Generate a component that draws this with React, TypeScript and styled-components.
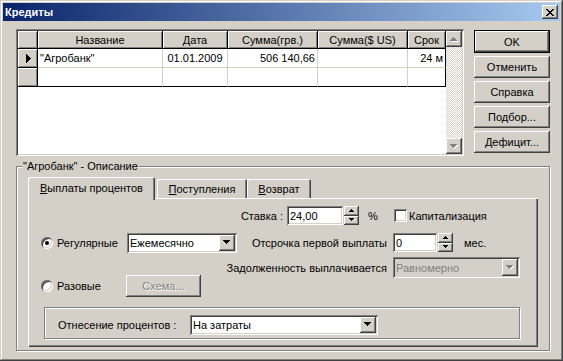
import { Fragment } from "react";
import styled, { createGlobalStyle, css } from "styled-components";

const FACE = "#d4d0c8";

const raised = css`
  box-shadow: inset -1px -1px #404040, inset 1px 1px #fff, inset -2px -2px #808080, inset 2px 2px ${FACE};
`;

const sunken = css`
  box-shadow: inset 1px 1px #808080, inset -1px -1px #fff, inset 2px 2px #404040, inset -2px -2px ${FACE};
`;

const etched = css`
  border: 1px solid #808080;
  box-shadow: inset 1px 1px #fff, 1px 1px #fff;
`;

const GlobalStyle = createGlobalStyle`
  html, body { margin: 0; padding: 0; background: ${FACE}; }
  body {
    font-family: "Liberation Sans", Arial, sans-serif;
    font-size: 11px;
    color: #000;
  }
  * { box-sizing: border-box; }
`;

// pixel triangles, like the classic windows glyphs
const PixelArrow = ({ dir, small, disabled }: { dir: "up" | "down"; small?: boolean; disabled?: boolean }) => {
  const widths = small ? [5, 3, 1] : [7, 5, 3, 1];
  const total = widths[0];
  const list = dir === "up" ? [...widths].reverse() : widths;
  const d = list
    .map((w, i) => {
      const x = (total - w) / 2;
      return `M${x} ${i}h${w}v1h-${w}z`;
    })
    .join("");
  return (
    <svg width={total + 1} height={list.length + 1} viewBox={`0 0 ${total + 1} ${list.length + 1}`} shapeRendering="crispEdges">
      {disabled && <path d={d} fill="#fff" transform="translate(1 1)" />}
      <path d={d} fill={disabled ? "#808080" : "#000"} />
    </svg>
  );
};

const RowMarker = () => (
  <svg width="5" height="9" viewBox="0 0 5 9" shapeRendering="crispEdges">
    <path d="M0 0h1v9H0zM1 1h1v7H1zM2 2h1v5H2zM3 3h1v3H3zM4 4h1v1H4z" fill="#000" />
  </svg>
);

const CloseGlyph = () => (
  <svg width="8" height="7" viewBox="0 0 8 7" shapeRendering="crispEdges">
    <path
      d="M0 0h2v1H0zM6 0h2v1H6zM1 1h2v1H1zM5 1h2v1H5zM2 2h4v1H2zM3 3h2v1H3zM2 4h4v1H2zM1 5h2v1H1zM5 5h2v1H5zM0 6h2v1H0zM6 6h2v1H6z"
      fill="#000"
    />
  </svg>
);

const Window = styled.div`
  width: 563px;
  height: 361px;
  padding: 3px;
  background: ${FACE};
  box-shadow: inset -1px -1px #404040, inset 1px 1px ${FACE}, inset -2px -2px #808080, inset 2px 2px #fff;
  display: flex;
  flex-direction: column;
`;

const TitleBar = styled.div`
  height: 18px;
  display: flex;
  align-items: center;
  padding: 0 2px 0 2px;
  background: linear-gradient(to right, #0a246a, #a6caf0);
`;

const Title = styled.div`
  flex: 1;
  color: #fff;
  font-weight: bold;
  font-size: 11px;
`;

const CloseButton = styled.div`
  width: 16px;
  height: 14px;
  background: ${FACE};
  ${raised};
  display: flex;
  align-items: center;
  justify-content: center;
`;

const Body = styled.div`
  flex: 1;
  display: flex;
  flex-direction: column;
  padding: 8px 10px 7px 13px;
`;

const TopRow = styled.div`
  display: flex;
  gap: 10px;
  height: 127px;
`;

const GridFrame = styled.div`
  flex: 1;
  display: flex;
  padding: 2px;
  background: #fff;
  ${sunken};
`;

const Table = styled.div`
  flex: 1;
  overflow: hidden;
  display: grid;
  grid-template-columns: 20px 125px 65px 90px 90px 38px;
  grid-template-rows: 18px 19px 19px;
  align-content: start;
  background: #fff;
`;

type CellKind = "head" | "fixed" | "data";

const Cell = styled.div<{ $kind: CellKind; $align?: "left" | "center" | "right"; $lastCol?: boolean; $lastRow?: boolean }>`
  display: flex;
  align-items: center;
  overflow: hidden;
  white-space: nowrap;
  padding: 0 2px;
  justify-content: ${(p) => (p.$align === "right" ? "flex-end" : p.$align === "center" ? "center" : "flex-start")};
  border-right: 1px solid ${(p) => (p.$kind === "data" && !p.$lastCol ? FACE : "#000")};
  border-bottom: 1px solid ${(p) => (p.$kind === "data" && !p.$lastRow ? FACE : "#000")};
  background: ${(p) => (p.$kind === "data" ? "#fff" : FACE)};
  ${(p) => p.$kind !== "data" && css`box-shadow: inset 1px 1px #fff, inset -1px -1px #808080;`}
`;

const MarkerCell = styled(Cell)`
  padding: 0 0 0 8px;
`;

const ScrollBar = styled.div`
  width: 16px;
  display: flex;
  flex-direction: column;
  background: repeating-conic-gradient(#fff 0 25%, ${FACE} 0 50%) 0 0 / 2px 2px;
`;

const ScrollButton = styled.div`
  width: 16px;
  height: 16px;
  background: ${FACE};
  ${raised};
  display: flex;
  align-items: center;
  justify-content: center;
`;

const ScrollTrack = styled.div`
  flex: 1;
`;

const ButtonColumn = styled.div`
  width: 76px;
  display: flex;
  flex-direction: column;
  gap: 3px;
  padding-top: 1px;
`;

const PushButton = styled.button<{ $default?: boolean; $disabled?: boolean; $w?: number }>`
  width: ${(p) => (p.$w ? `${p.$w}px` : "100%")};
  height: ${(p) => (p.$default ? 23 : 22)}px;
  padding: 0;
  margin: 0;
  font: inherit;
  border: ${(p) => (p.$default ? "1px solid #000" : "0")};
  background: ${FACE};
  ${raised};
  display: flex;
  align-items: center;
  justify-content: center;
  color: ${(p) => (p.$disabled ? "#808080" : "#000")};
  text-shadow: ${(p) => (p.$disabled ? "1px 1px #fff" : "none")};
`;

const GroupBox = styled.fieldset`
  flex: 1;
  margin: 4px 0 0 0;
  padding: 4px 11px 3px 11px;
  min-width: 0;
  ${etched};
  display: flex;
  flex-direction: column;
`;

const Legend = styled.legend`
  padding: 0 1px;
  margin-left: -6px;
  line-height: 13px;
  background: ${FACE};
`;

const TabStrip = styled.div`
  display: flex;
  align-items: flex-end;
  height: 21px;
`;

const Tab = styled.div<{ $active?: boolean; $w: number; $gap?: number }>`
  width: ${(p) => p.$w}px;
  height: ${(p) => (p.$active ? 23 : 19)}px;
  margin-bottom: ${(p) => (p.$active ? -2 : 0)}px;
  margin-left: ${(p) => p.$gap ?? 0}px;
  padding-bottom: ${(p) => (p.$active ? 2 : 0)}px;
  position: relative;
  z-index: ${(p) => (p.$active ? 1 : 0)};
  display: flex;
  align-items: center;
  justify-content: center;
  background: ${FACE};
  border-radius: 2px 2px 0 0;
  box-shadow: inset 1px 1px #fff, inset -1px 0 #404040, inset -2px 0 #808080;
`;

const Panel = styled.div`
  flex: 1;
  display: flex;
  flex-direction: column;
  padding: 7px 0 0 13px;
  background: ${FACE};
  box-shadow: inset 1px 1px #fff, inset -1px -1px #404040, inset -2px -2px #808080;
`;

const Row = styled.div<{ $h: number; $mt: number }>`
  display: flex;
  align-items: center;
  height: ${(p) => p.$h}px;
  margin-top: ${(p) => p.$mt}px;
`;

const SplitRow = styled.div`
  display: flex;
  height: 40px;
  margin-top: 4px;
`;

const LeftGroup = styled.div`
  display: flex;
  align-items: center;
  align-self: flex-end;
`;

const RightGroup = styled.div`
  display: flex;
  align-items: center;
  align-self: flex-start;
`;

const Caption = styled.span<{ $w: number; $right?: boolean; $pr?: number }>`
  width: ${(p) => p.$w}px;
  flex: none;
  white-space: nowrap;
  text-align: ${(p) => (p.$right ? "right" : "left")};
  padding-right: ${(p) => (p.$right ? p.$pr ?? 6 : 0)}px;
`;

const Unit = styled.span<{ $w: number; $pl: number }>`
  width: ${(p) => p.$w}px;
  padding-left: ${(p) => p.$pl}px;
  flex: none;
`;

const EditField = styled.div<{ $w: number }>`
  width: ${(p) => p.$w}px;
  height: 19px;
  padding: 0 3px;
  display: flex;
  align-items: center;
  background: #fff;
  ${sunken};
`;

const SpinButtons = styled.div`
  width: 15px;
  height: 19px;
  margin-left: 1px;
  display: flex;
  flex-direction: column;
`;

const SpinButton = styled.div`
  flex: 1;
  background: ${FACE};
  ${raised};
  display: flex;
  align-items: center;
  justify-content: center;
`;

const Combo = styled.div<{ $w: number; $h: number; $disabled?: boolean }>`
  width: ${(p) => p.$w}px;
  height: ${(p) => p.$h}px;
  flex: none;
  padding: 2px;
  display: flex;
  background: ${(p) => (p.$disabled ? FACE : "#fff")};
  color: ${(p) => (p.$disabled ? "#808080" : "#000")};
  ${sunken};
`;

const ComboText = styled.span`
  flex: 1;
  display: flex;
  align-items: center;
  padding-left: 1px;
  white-space: nowrap;
`;

const DropButton = styled.div`
  width: 16px;
  background: ${FACE};
  ${raised};
  display: flex;
  align-items: center;
  justify-content: center;
`;

const RadioLabel = styled.label<{ $w: number }>`
  width: ${(p) => p.$w}px;
  flex: none;
  display: flex;
  align-items: center;
  gap: 4px;
`;

const RadioCircle = styled.span<{ $checked?: boolean }>`
  width: 12px;
  height: 12px;
  border-radius: 50%;
  background: #fff;
  ${sunken};
  display: flex;
  align-items: center;
  justify-content: center;
  &::after {
    content: "";
    width: 4px;
    height: 4px;
    border-radius: 50%;
    background: #000;
    display: ${(p) => (p.$checked ? "block" : "none")};
  }
`;

const CheckLabel = styled.label`
  display: flex;
  align-items: center;
  gap: 2px;
`;

const CheckBox = styled.span`
  width: 13px;
  height: 13px;
  background: #fff;
  ${sunken};
`;

const InnerFrame = styled.div`
  width: 476px;
  height: 32px;
  margin: 10px 0 0 3px;
  padding: 3px 0 0 13px;
  display: flex;
  align-items: center;
  ${etched};
`;

const SpinEdit = ({ value, w }: { value: string; w: number }) => (
  <>
    <EditField $w={w}>{value}</EditField>
    <SpinButtons>
      <SpinButton>
        <PixelArrow dir="up" small />
      </SpinButton>
      <SpinButton>
        <PixelArrow dir="down" small />
      </SpinButton>
    </SpinButtons>
  </>
);

const ComboBox = ({ value, w, h, disabled }: { value: string; w: number; h: number; disabled?: boolean }) => (
  <Combo $w={w} $h={h} $disabled={disabled}>
    <ComboText>{value}</ComboText>
    <DropButton>
      <PixelArrow dir="down" disabled={disabled} />
    </DropButton>
  </Combo>
);

const columns = [
  { title: "Название", align: "left" as const },
  { title: "Дата", align: "center" as const },
  { title: "Сумма(грв.)", align: "right" as const },
  { title: "Сумма($ US)", align: "right" as const },
  { title: "Срок", align: "right" as const },
];

const rows = [
  ['"Агробанк"', "01.01.2009", "506 140,66", "", "24 м"],
  ["", "", "", "", ""],
];

export default function App() {
  return (
    <>
      <GlobalStyle />
      <Window>
        <TitleBar>
          <Title>Кредиты</Title>
          <CloseButton>
            <CloseGlyph />
          </CloseButton>
        </TitleBar>
        <Body>
          <TopRow>
            <GridFrame>
              <Table>
                <Cell $kind="head" />
                {columns.map((c, i) => (
                  <Cell key={c.title} $kind="head" $align="center" $lastCol={i === columns.length - 1}>
                    {c.title}
                  </Cell>
                ))}
                {rows.map((r, ri) => (
                  <Fragment key={ri}>
                    <MarkerCell $kind="fixed">{ri === 0 && <RowMarker />}</MarkerCell>
                    {r.map((v, ci) => (
                      <Cell
                        key={ci}
                        $kind="data"
                        $align={columns[ci].align}
                        $lastCol={ci === r.length - 1}
                        $lastRow={ri === rows.length - 1}
                      >
                        {v}
                      </Cell>
                    ))}
                  </Fragment>
                ))}
              </Table>
              <ScrollBar>
                <ScrollButton>
                  <PixelArrow dir="up" disabled />
                </ScrollButton>
                <ScrollTrack />
                <ScrollButton>
                  <PixelArrow dir="down" disabled />
                </ScrollButton>
              </ScrollBar>
            </GridFrame>
            <ButtonColumn>
              <PushButton $default>OK</PushButton>
              <PushButton>Отменить</PushButton>
              <PushButton>Справка</PushButton>
              <PushButton>Подбор...</PushButton>
              <PushButton>Дефицит...</PushButton>
            </ButtonColumn>
          </TopRow>

          <GroupBox>
            <Legend>"Агробанк" - Описание</Legend>
            <TabStrip>
              <Tab $active $w={127}>
                <span>
                  <u>В</u>ыплаты процентов
                </span>
              </Tab>
              <Tab $w={90} $gap={2}>
                <span>
                  <u>П</u>оступления
                </span>
              </Tab>
              <Tab $w={64}>
                <span>
                  <u>В</u>озврат
                </span>
              </Tab>
            </TabStrip>
            <Panel>
              <Row $h={21} $mt={0}>
                <Caption $w={246} $right $pr={4}>
                  Ставка :
                </Caption>
                <SpinEdit value="24,00" w={56} />
                <Unit $w={35} $pl={9}>
                  %
                </Unit>
                <CheckLabel>
                  <CheckBox />
                  Капитализация
                </CheckLabel>
              </Row>
              <Row $h={21} $mt={6}>
                <RadioLabel $w={86}>
                  <RadioCircle $checked />
                  Регулярные
                </RadioLabel>
                <ComboBox value="Ежемесячно" w={110} h={20} />
                <Caption $w={156} $right>
                  Отсрочка первой выплаты
                </Caption>
                <SpinEdit value="0" w={44} />
                <Unit $w={40} $pl={11}>
                  мес.
                </Unit>
              </Row>
              <SplitRow>
                <LeftGroup>
                  <RadioLabel $w={85}>
                    <RadioCircle />
                    Разовые
                  </RadioLabel>
                  <PushButton $disabled $w={75}>
                    Схема...
                  </PushButton>
                </LeftGroup>
                <RightGroup>
                  <Caption $w={192} $right>
                    Задолженность выплачивается
                  </Caption>
                  <ComboBox value="Равномерно" w={127} h={21} disabled />
                </RightGroup>
              </SplitRow>
              <InnerFrame>
                <Caption $w={132}>Отнесение процентов :</Caption>
                <ComboBox value="На затраты" w={188} h={20} />
              </InnerFrame>
            </Panel>
          </GroupBox>
        </Body>
      </Window>
    </>
  );
}
